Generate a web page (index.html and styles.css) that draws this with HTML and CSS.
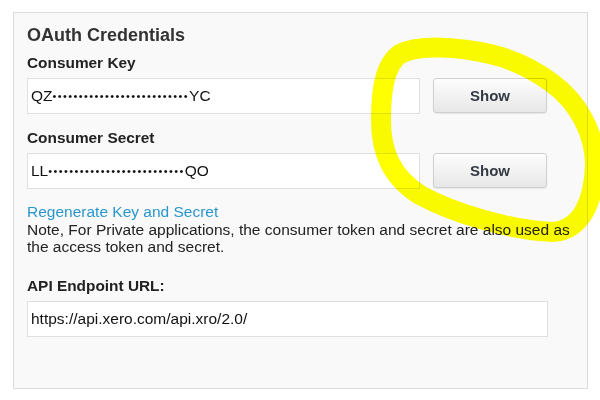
FILE: index.html
```html
<!DOCTYPE html>
<html>
<head>
    <link rel="stylesheet" href="styles.css">
    <title>OAuth Credentials</title>
</head>
<body>
    <div class="panel">
        <h3 class="panel-title">OAuth Credentials</h3>

        <label class="field-label">Consumer Key</label>
        <div class="field-row">
            <div class="field-input">QZ<span class="mask">••••••••••••••••••••••••••</span>YC</div>
            <button class="btn">Show</button>
        </div>

        <label class="field-label">Consumer Secret</label>
        <div class="field-row last">
            <div class="field-input">LL<span class="mask">••••••••••••••••••••••••••</span>QO</div>
            <button class="btn">Show</button>
        </div>

        <a class="link" href="#">Regenerate Key and Secret</a>
        <p class="note">Note, For Private applications, the consumer token and secret are also used as the access token and secret.</p>

        <label class="field-label">API Endpoint URL:</label>
        <div class="field-input wide">https://api.xero.com/api.xro/2.0/</div>
    </div>

    <svg class="scribble" width="600" height="400" viewBox="0 0 600 400">
        <path d="M 490 54 C 460 47, 420 44, 400 54 C 385 64, 381 90, 381 120 C 381 150, 390 176, 420 195 C 455 214, 510 230, 553 232 C 582 230, 594 200, 595 165 C 595 133, 578 102, 552 83 C 532 68, 512 59, 490 54 Z"
              fill="none" stroke="#ffff00" stroke-width="20" stroke-linecap="round" stroke-linejoin="round"/>
    </svg>
</body>
</html>
```

FILE: styles.css
```css
body {
    margin: 0;
    background-color: #ffffff;
    font-family: "Liberation Sans", Arial, sans-serif;
    color: #222222;
}

.panel {
    box-sizing: border-box;
    width: 575px;
    height: 377px;
    margin: 12px 0 0 13px;
    padding: 11px 8px 0 13px;
    background-color: #f9f9f9;
    border: 1px solid #dcdcdc;
}

.panel-title {
    margin: 0 0 8px;
    font-size: 18px;
    line-height: 22px;
    font-weight: bold;
    color: #333333;
}

.field-label {
    display: block;
    margin: 0 0 6px;
    font-size: 15.4px;
    line-height: 18px;
    font-weight: bold;
    color: #222222;
}

.field-row {
    display: flex;
    align-items: flex-start;
    gap: 13px;
    margin-bottom: 15px;
}

.field-row.last {
    margin-bottom: 14px;
}

.field-input {
    box-sizing: border-box;
    width: 393px;
    height: 36px;
    padding: 0 3px;
    border: 1px solid #e0e0e0;
    background-color: #ffffff;
    font-size: 15.5px;
    line-height: 34px;
    color: #111111;
    white-space: nowrap;
}

.field-input.wide {
    width: 521px;
}

.mask {
    font-size: 11px;
    letter-spacing: 1.4px;
    vertical-align: 1px;
}

.btn {
    box-sizing: border-box;
    width: 114px;
    height: 35px;
    margin: 0;
    border: 1px solid #cfcfcf;
    border-radius: 3px;
    background: linear-gradient(#fdfdfd, #e7e7e7);
    box-shadow: 0 1px 1px rgba(0, 0, 0, 0.08);
    font-family: "Liberation Sans", Arial, sans-serif;
    font-size: 15px;
    font-weight: bold;
    color: #333a44;
}

.link {
    display: block;
    font-size: 15.5px;
    line-height: 17.5px;
    color: #2a96cf;
    text-decoration: none;
}

.note {
    margin: 0 0 21px;
    font-size: 15.5px;
    line-height: 17.5px;
    color: #222222;
}

.scribble {
    position: absolute;
    top: 0;
    left: 0;
    pointer-events: none;
    mix-blend-mode: multiply;
}
```
